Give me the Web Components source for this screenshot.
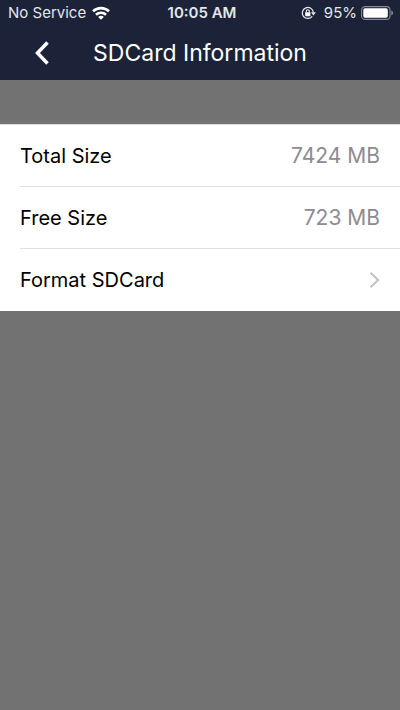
<!DOCTYPE html>
<html lang="en">
<head>
<meta charset="utf-8">
<meta name="viewport" content="width=device-width, initial-scale=1">
<title>SDCard Information</title>
<style>
  body { margin: 0; min-height: 100vh; background: #727272; font-family: Inter, "Liberation Sans", sans-serif; }
</style>
</head>
<body>
<sd-app></sd-app>

<template id="t-app">
  <style>
    :host { display: block; }
    header { background: #1c2237; color: #fff; height: 80px; }
    main { padding-top: 44px; }
  </style>
  <header>
    <status-bar></status-bar>
    <nav-bar>SDCard Information</nav-bar>
  </header>
  <main>
    <settings-list>
      <info-row><span slot="label">Total Size</span><span slot="value">7424 MB</span></info-row>
      <info-row><span slot="label">Free Size</span><span slot="value">723 MB</span></info-row>
      <link-row>Format SDCard</link-row>
    </settings-list>
  </main>
</template>

<template id="t-status">
  <style>
    :host { display: grid; grid-template-columns: 1fr auto 1fr; align-items: center; height: 26px; padding: 0 6px 0 8px; font-size: 15px; line-height: 26px; color: #e4e6eb; }
    .side { display: flex; align-items: center; gap: 6px; }
    .end { justify-content: flex-end; gap: 4px; }
    time { font-weight: 600; padding-left: 2px; }
    .lock { margin-right: 4px; }
    svg { display: block; flex: none; }
  </style>
  <div class="side">
    <span>No Service</span>
    <svg width="18" height="14" viewBox="0 0 18 14" fill="none" stroke="#fff" stroke-width="2.6" aria-hidden="true">
      <path d="M1 5.300C5.500 1 12.500 1 17 5.300"/>
      <path d="M4 8.700C6.800 6 11.200 6 14 8.700"/>
      <path d="M6.200 10.900C7.800 9.400 10.200 9.400 11.800 10.900L9 13.700Z" fill="#fff" stroke="none"/>
    </svg>
  </div>
  <time>10:05 AM</time>
  <div class="side end">
    <svg class="lock" width="15" height="14" viewBox="0 0 15 14" fill="none" aria-hidden="true">
      <path d="M11.200 10.300A5.500 5.500 0 1 1 12.300 6.500" stroke="#e4e6eb" stroke-width="1.300"/>
      <path d="M9.900 6.300H14.900L12.400 9.500Z" fill="#e4e6eb"/>
      <rect x="4.200" y="6.200" width="5.200" height="4" rx=".5" fill="#fff"/>
      <path d="M5.300 6.500V5.200A1.500 1.500 0 0 1 8.300 5.200V6.500" stroke="#fff" stroke-width="1.100"/>
    </svg>
    <span>95%</span>
    <svg width="33" height="14" viewBox="0 0 33 14" aria-hidden="true">
      <rect x=".6" y=".6" width="28.400" height="12.800" rx="3.500" fill="none" stroke="#858997" stroke-width="1.100"/>
      <rect x="2.300" y="2.300" width="24.500" height="9.400" rx="1.700" fill="#fff"/>
      <path d="M30.300 4.600C32.700 5.300 32.700 8.700 30.300 9.400Z" fill="#858997"/>
    </svg>
  </div>
</template>

<template id="t-nav">
  <style>
    :host { display: grid; grid-template-columns: 60px 1fr 60px; align-items: center; height: 54px; }
    button { justify-self: end; display: grid; place-items: center; width: 36px; height: 44px; padding: 0; border: 0; background: none; color: #fff; }
    h1 { margin: 0; text-align: center; font-size: 23px; line-height: 54px; font-weight: 400; white-space: nowrap; }
  </style>
  <button type="button" aria-label="Back">
    <svg width="16" height="24" viewBox="0 0 16 24" fill="none" stroke="currentColor" stroke-width="3.500" aria-hidden="true"><path d="M13.500 1.500L3.500 12L13.500 22.500"/></svg>
  </button>
  <h1><slot></slot></h1>
</template>

<template id="t-list">
  <style>
    :host { display: block; background: #fff; border-top: 1px solid #ddd; padding-left: 20px; }
  </style>
  <slot></slot>
</template>

<template id="t-info">
  <style>
    :host { display: flex; justify-content: space-between; align-items: center; height: 61px; padding-right: 20px; border-bottom: 1px solid #dfdfe0; font-size: 20px; line-height: 28px; color: #000; }
    .value { font-size: 21px; color: #8c8c91; }
  </style>
  <slot name="label"></slot>
  <span class="value"><slot name="value"></slot></span>
</template>

<template id="t-link">
  <style>
    :host { display: block; }
    button { display: flex; justify-content: space-between; align-items: center; width: 100%; height: 62px; padding: 0 20px 0 0; border: 0; background: none; font: inherit; font-size: 20px; line-height: 28px; color: #000; text-align: left; }
  </style>
  <button type="button"><slot></slot>
    <svg width="11" height="16" viewBox="0 0 11 16" fill="none" stroke="#c4c4c8" stroke-width="2.200" aria-hidden="true"><path d="M1.500 .8L9 8L1.500 15.200"/></svg>
  </button>
</template>

<script>
  const define = (name, templateId) => customElements.define(name, class extends HTMLElement {
    constructor() {
      super();
      this.attachShadow({ mode: "open" })
        .append(document.getElementById(templateId).content.cloneNode(true));
    }
  });
  define("status-bar", "t-status");
  define("nav-bar", "t-nav");
  define("settings-list", "t-list");
  define("info-row", "t-info");
  define("link-row", "t-link");
  define("sd-app", "t-app");
</script>
</body>
</html>
